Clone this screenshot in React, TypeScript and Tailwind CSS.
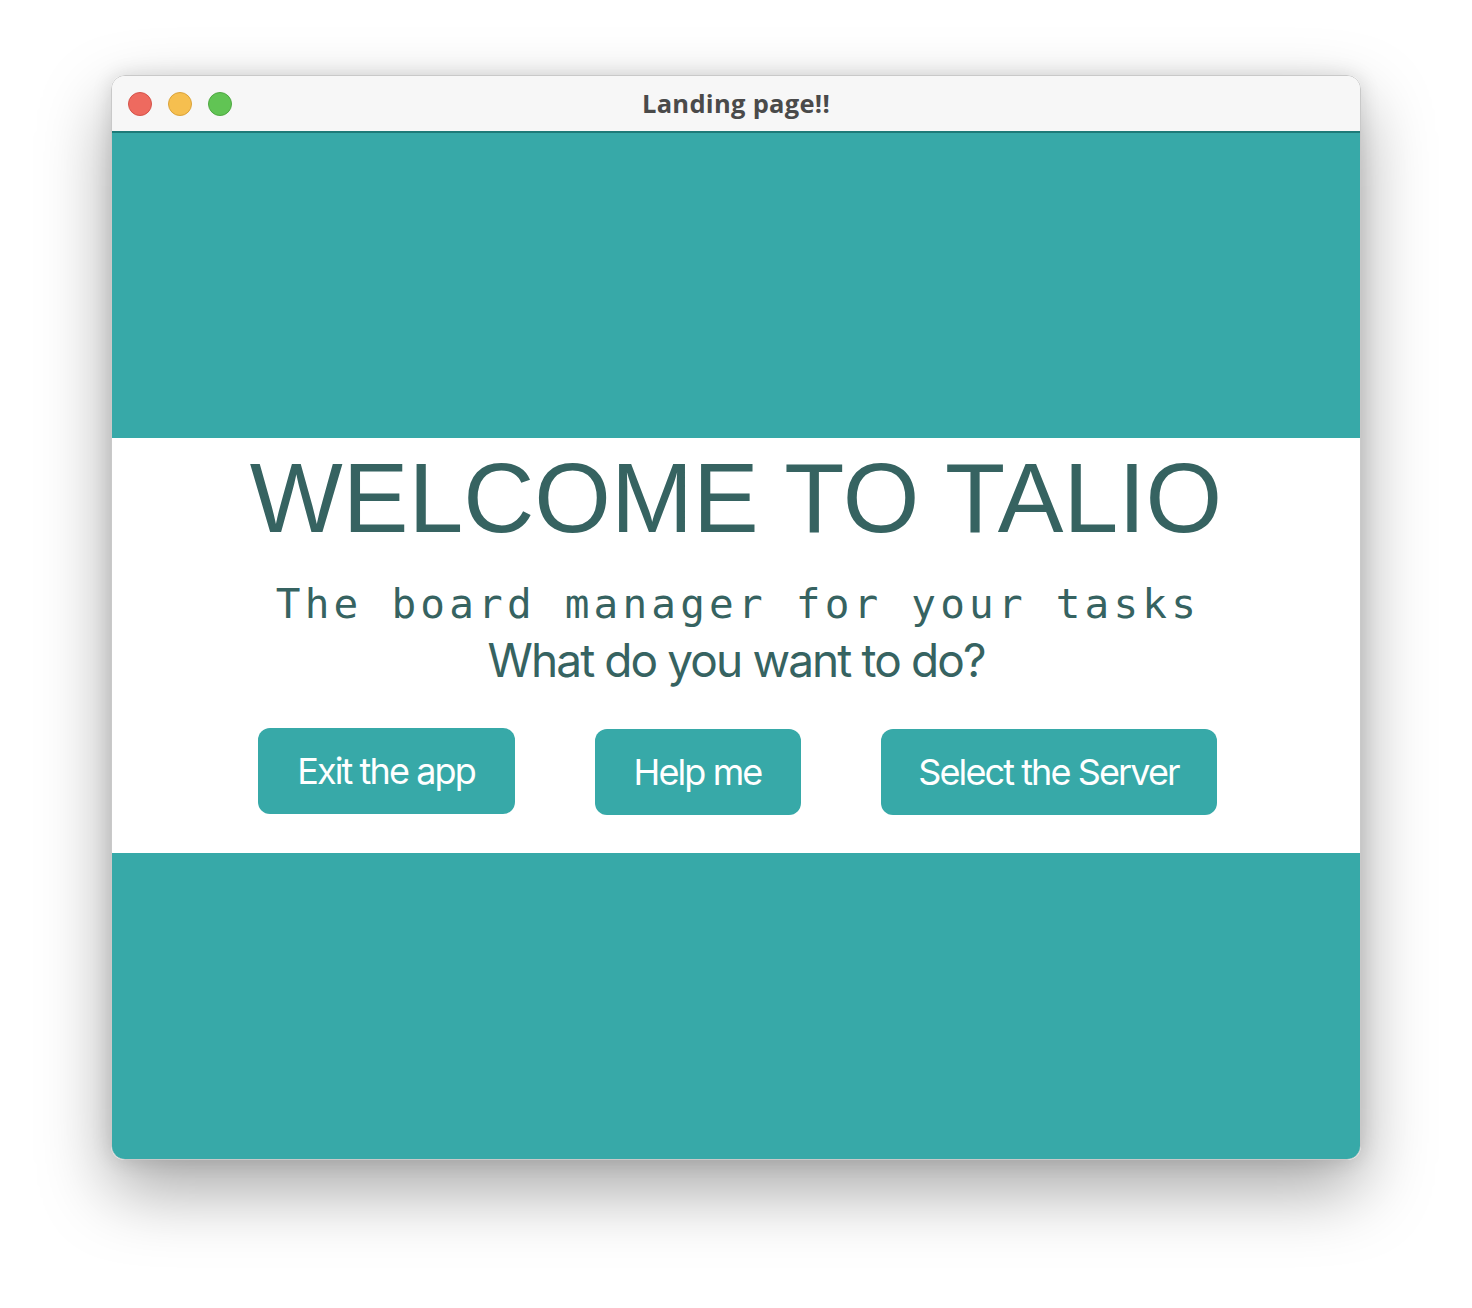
import React from "react";

export default function App() {
  return (
    <div className="w-[1472px] h-[1308px] bg-white pt-[75px]">
      <div className="ml-[111px] w-[1250px] h-[1085px] rounded-[14px] overflow-hidden flex flex-col border border-[#c9c9c9] shadow-[0_30px_70px_rgba(0,0,0,0.35),0_0_20px_rgba(0,0,0,0.12)]">
        <div className="relative h-[57px] shrink-0 bg-[#f7f7f7] border-b-2 border-[#1d7a78] flex items-center">
          <div className="flex items-center gap-[16px] pl-[16px]">
            <div className="w-[24px] h-[24px] rounded-full bg-[#ee6a5f] border border-[#d5534a]" />
            <div className="w-[24px] h-[24px] rounded-full bg-[#f6bf4f] border border-[#dba33a]" />
            <div className="w-[24px] h-[24px] rounded-full bg-[#61c454] border border-[#4fa842]" />
          </div>
          <div className="absolute inset-0 flex items-center justify-center pointer-events-none">
            <span className="text-[25.5px] font-bold text-[#4a4a4a] tracking-[0.3px]" style={{ fontFamily: '"Open Sans", "Noto Sans", sans-serif' }}>
              Landing page!!
            </span>
          </div>
        </div>
        <div className="h-[305px] shrink-0 bg-[#37a9a8]" />
        <div className="h-[415px] shrink-0 bg-white flex flex-col items-center">
          <div
            className="mt-[4px] text-[98.5px] leading-[112px] text-[#366361]"
            style={{ fontFamily: '"Liberation Sans", Arial, sans-serif' }}
          >
            WELCOME TO TALIO
          </div>
          <div
            className="mt-[26px] text-[41px] leading-[48px] text-[#366361] tracking-[4.2px] pl-[4px]"
            style={{ fontFamily: '"DejaVu Sans Mono", monospace' }}
          >
            The board manager for your tasks
          </div>
          <div
            className="mt-[6px] text-[46px] leading-[52px] text-[#366361] tracking-[-1.9px]"
            style={{ fontFamily: 'Inter, "Liberation Sans", sans-serif' }}
          >
            What do you want to do?
          </div>
          <div className="mt-[42px] flex items-start" style={{ fontFamily: 'Inter, "Liberation Sans", sans-serif' }}>
            <button className="w-[257px] h-[86px] rounded-[12px] bg-[#37a9a8] text-white text-[36px] tracking-[-1.9px] ml-[2px]">
              Exit the app
            </button>
            <button className="ml-[80px] mt-[1px] w-[206px] h-[86px] rounded-[12px] bg-[#37a9a8] text-white text-[36px] tracking-[-1.9px]">
              Help me
            </button>
            <button className="ml-[80px] mt-[1px] w-[336px] h-[86px] rounded-[12px] bg-[#37a9a8] text-white text-[36px] tracking-[-1.9px]">
              Select the Server
            </button>
          </div>
        </div>
        <div className="flex-1 bg-[#37a9a8]" />
      </div>
    </div>
  );
}
